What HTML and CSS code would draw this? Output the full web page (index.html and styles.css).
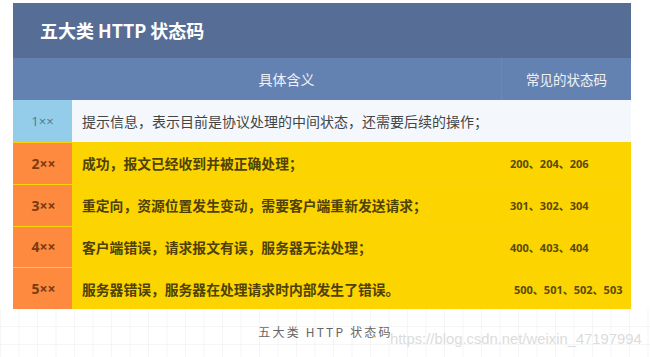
FILE: index.html
```html
<!DOCTYPE html>
<html lang="zh-CN">
<head>
<meta charset="utf-8">
<link rel="stylesheet" href="styles.css">
</head>
<body>
<div class="page">
  <div class="table">
    <div class="title">五大类 HTTP 状态码</div>
    <div class="row head">
      <div class="c1"></div>
      <div class="c2">具体含义</div>
      <div class="c3">常见的状态码</div>
    </div>
    <div class="row info">
      <div class="c1">1××</div>
      <div class="c2">提示信息，表示目前是协议处理的中间状态，还需要后续的操作；</div>
      <div class="c3"></div>
    </div>
    <div class="row warn">
      <div class="c1">2××</div>
      <div class="c2">成功，报文已经收到并被正确处理；</div>
      <div class="c3">200、204、206</div>
    </div>
    <div class="row warn">
      <div class="c1">3××</div>
      <div class="c2">重定向，资源位置发生变动，需要客户端重新发送请求；</div>
      <div class="c3">301、302、304</div>
    </div>
    <div class="row warn">
      <div class="c1">4××</div>
      <div class="c2">客户端错误，请求报文有误，服务器无法处理；</div>
      <div class="c3">400、403、404</div>
    </div>
    <div class="row warn">
      <div class="c1">5××</div>
      <div class="c2">服务器错误，服务器在处理请求时内部发生了错误。</div>
      <div class="c3 wide">500、501、502、503</div>
    </div>
  </div>
  <div class="foot">
    <div class="caption">五大类 HTTP 状态码</div>
    <div class="watermark">https://blog.csdn.net/weixin_47197994</div>
  </div>
</div>
</body>
</html>
```
FILE: styles.css
```css
html, body {
  margin: 0;
  padding: 0;
  background: #ffffff;
}
body {
  font-family: "Noto Sans CJK SC", "Noto Sans", sans-serif;
  width: 650px;
  height: 357px;
  overflow: hidden;
}
.page {
  position: relative;
  height: 357px;
  display: flex;
  flex-direction: column;
}
.table {
  margin: 3px 0 0 13px;
  width: 618px;
  display: flex;
  flex-direction: column;
}
.title {
  height: 55px;
  background: #566d96;
  color: #ffffff;
  font-size: 18px;
  font-weight: 700;
  line-height: 55px;
  padding-left: 27px;
}
.row {
  display: flex;
  height: 42px;
  align-items: stretch;
}
.row > div {
  display: flex;
  align-items: center;
  box-sizing: border-box;
}
.c1 {
  width: 59px;
  justify-content: center;
  font-family: "Open Sans", "Noto Sans CJK SC", sans-serif;
  font-size: 13px;
}
.c2 {
  flex: 1;
  padding-left: 10px;
  font-size: 14px;
}
.c3 {
  width: 130px;
  padding-left: 9px;
  font-family: "Open Sans", "Noto Sans CJK SC", sans-serif;
  font-size: 11px;
  font-weight: 700;
}
.c3.wide {
  padding-left: 11px;
  width: 128px;
}
.head {
  background: #6482b1;
  color: #eef2f8;
}
.head .c2 {
  justify-content: center;
  padding-left: 0;
  padding-right: 0;
  font-size: 14px;
}
.head .c3 {
  border-left: 1px solid #6b88b6;
  justify-content: center;
  padding-left: 0;
  font-family: "Noto Sans CJK SC", sans-serif;
  font-weight: 400;
  font-size: 13.5px;
}
.info {
  background: #f4f8fc;
  color: #444444;
}
.info .c1 {
  background: #93cde9;
  color: #4b7898;
}
.warn {
  height: 41.75px;
  background: #fcd500;
  color: #4e4106;
  border-top: 1px solid #f8d408;
  box-sizing: border-box;
}
.warn .c1 {
  background: #fd8a3e;
  color: #7a3b14;
  font-weight: 700;
  font-size: 14px;
  padding-left: 2px;
}
.warn .c2 {
  font-weight: 700;
  font-size: 13.8px;
}
.warn .c3 {
  color: #5a4a08;
}
.foot {
  flex: 1;
  position: relative;
  background-color: #ffffff;
  background-image:
    linear-gradient(to right, #f5f5f5 1px, transparent 1px),
    linear-gradient(to bottom, #f5f5f5 1px, transparent 1px);
  background-size: 18.5px 18px;
  background-position: 0 -1px;
  display: flex;
  justify-content: center;
}
.caption {
  margin-top: 14px;
  margin-left: 1px;
  font-size: 12px;
  letter-spacing: 2.2px;
  color: #666666;
}
.watermark {
  position: absolute;
  left: 390px;
  top: 22px;
  font-family: "Liberation Sans", Arial, sans-serif;
  font-size: 14.8px;
  color: #dcdcdc;
  white-space: nowrap;
}
```
